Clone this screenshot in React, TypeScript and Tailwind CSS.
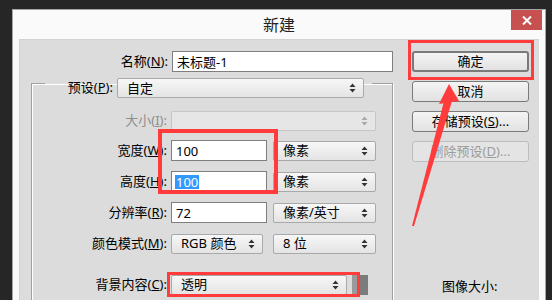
import React from 'react';

const font = "font-['Noto_Sans','Noto_Sans_CJK_SC',sans-serif]";

function Arrows({ disabled }: { disabled?: boolean }) {
  return (
    <svg width="7" height="10" viewBox="0 0 7 10" className="shrink-0">
      <path d="M3.5 0.5 L6.5 4 L0.5 4 Z M0.5 6 L6.5 6 L3.5 9.5 Z" fill={disabled ? '#a8a8a8' : '#333'} />
    </svg>
  );
}

function Select({ value, className, disabled }: { value?: string; className: string; disabled?: boolean }) {
  return (
    <div
      className={`h-[20px] flex items-center justify-between pl-[9px] pr-[7px] rounded-[2px] border ${
        disabled ? 'border-[#c6c6c6] bg-[#e6e6e6]' : 'border-[#a9a9a9] bg-gradient-to-b from-[#f7f7f7] to-[#e4e4e4]'
      } ${className}`}
    >
      <span className="text-[13px] leading-none text-black">{value}</span>
      <Arrows disabled={disabled} />
    </div>
  );
}

function Input({ value, className, selected }: { value: string; className: string; selected?: boolean }) {
  return (
    <div className={`h-[21px] flex items-center pl-[3px] bg-white border border-[#7f7f7f] ${className}`}>
      <span className={`text-[13px] leading-[14px] px-[1px] ${selected ? 'bg-[#3399ff] text-white' : 'text-black'}`}>{value}</span>
    </div>
  );
}

function Btn({ children, primary, disabled }: { children: React.ReactNode; primary?: boolean; disabled?: boolean }) {
  return (
    <div
      className={`w-[117px] h-[21px] flex items-center justify-center rounded-[3px] text-[13px] ${
        disabled
          ? 'border border-[#bdbdbd] bg-[#e4e4e4] text-[#9c9c9c]'
          : primary
          ? 'border-2 border-[#7a7a7a] bg-gradient-to-b from-[#f4f4f4] to-[#e2e2e2] text-black'
          : 'border border-[#7a7a7a] bg-gradient-to-b from-[#f4f4f4] to-[#e2e2e2] text-black'
      }`}
    >
      {children}
    </div>
  );
}

export default function App() {
  return (
    <div className={`relative w-[552px] h-[300px] overflow-hidden bg-[#262626] pt-[9px] ${font}`}>
      <div className="ml-[12px] w-[534px] h-[300px] border border-[#a6a6a6] bg-[#fafafa] px-[6px]">
        {/* title bar */}
        <div className="h-[29px] -mx-[6px] grid grid-cols-[1fr_auto_1fr]">
          <div />
          <div className="self-center text-[16px] text-[#222] pt-[1px]">新建</div>
          <div className="justify-self-end mr-[3px] w-[31px] h-[20px] bg-[#c75050] flex items-center justify-center">
            <svg width="10" height="9" viewBox="0 0 10 9">
              <path d="M1 0.5 L9 8.5 M9 0.5 L1 8.5" stroke="#fff" strokeWidth="2" />
            </svg>
          </div>
        </div>

        {/* content */}
        <div className="flex h-[262px] bg-[#dcdcdc] border-l border-t border-[#d2d2d2] text-[13px] text-black">
          {/* left column */}
          <div className="w-[373px] flex flex-col">
            <div className="flex items-center gap-[4px] mt-[11px] h-[21px]">
              <span className="w-[148px] text-right">名称(<u>N</u>):</span>
              <Input value="未标题-1" className="w-[221px]" />
            </div>

            <fieldset className="ml-[11px] w-[362px] -mt-[3px] h-[240px] border border-[#a0a0a0] shadow-[inset_1px_1px_0_#fff,1px_1px_0_#fff] p-0 m-0">
              <legend className="ml-[13px] pt-[9px] pr-[8px]">
                <div className="flex items-center gap-[4px]">
                  <span className="w-[68px] text-right">预设(<u>P</u>):</span>
                  <Select value="自定" className="w-[247px]" />
                </div>
              </legend>

              <div className="flex items-center gap-[4px] mt-[12px] h-[21px]">
                <span className="w-[135px] text-right text-[#8e8e8e]">大小(<u>I</u>):</span>
                <Select className="w-[205px]" disabled />
              </div>
              <div className="flex items-center gap-[4px] mt-[9px] h-[21px]">
                <span className="w-[135px] text-right">宽度(<u>W</u>):</span>
                <Input value="100" className="w-[96px]" />
                <Select value="像素" className="w-[103px] ml-[2px]" />
              </div>
              <div className="flex items-center gap-[4px] mt-[10px] h-[21px]">
                <span className="w-[135px] text-right">高度(<u>H</u>):</span>
                <Input value="100" className="w-[96px]" selected />
                <Select value="像素" className="w-[103px] ml-[2px]" />
              </div>
              <div className="flex items-center gap-[4px] mt-[10px] h-[21px]">
                <span className="w-[135px] text-right">分辨率(<u>R</u>):</span>
                <Input value="72" className="w-[96px]" />
                <Select value="像素/英寸" className="w-[103px] ml-[2px]" />
              </div>
              <div className="flex items-center gap-[4px] mt-[10px] h-[21px]">
                <span className="w-[135px] text-right">颜色模式(<u>M</u>):</span>
                <Select value="RGB 颜色" className="w-[92px]" />
                <Select value="8 位" className="w-[103px] ml-[6px]" />
              </div>
              <div className="flex items-center gap-[4px] mt-[20px] h-[21px]">
                <span className="w-[135px] text-right">背景内容(<u>C</u>):</span>
                <Select value="透明" className="w-[176px]" />
                <div className="ml-[1px] w-[16px] h-[20px] bg-[#7c7c7c] border-l-[5px] border-[#9a9a9a]" />
              </div>
            </fieldset>
          </div>

          {/* right column */}
          <div className="flex flex-col pl-[19px] pt-[11px] gap-[9px]">
            <Btn primary>确定</Btn>
            <Btn>取消</Btn>
            <Btn>存储预设(<u>S</u>)...</Btn>
            <Btn disabled>删除预设(<u>D</u>)...</Btn>
            <div className="mt-[106px] pl-[30px]">图像大小:</div>
          </div>
        </div>
      </div>

      {/* annotations */}
      <div className="absolute left-[408px] top-[40px] w-[126px] h-[40px] border-[3px] border-[#ff3b3b]" />
      <div className="absolute left-[158px] top-[129px] w-[120px] h-[65px] border-[4px] border-[#ff3b3b]" />
      <div className="absolute left-[167px] top-[272px] w-[193px] h-[25px] border-[3px] border-[#ff3b3b]" />
      <svg className="absolute left-0 top-0" width="552" height="300" viewBox="0 0 552 300">
        <polygon points="449,84 459,101 439,104" fill="#ff3b3b" />
        <polygon points="444,101 452,101 414,226 412,226" fill="#ff3b3b" />
      </svg>
    </div>
  );
}
